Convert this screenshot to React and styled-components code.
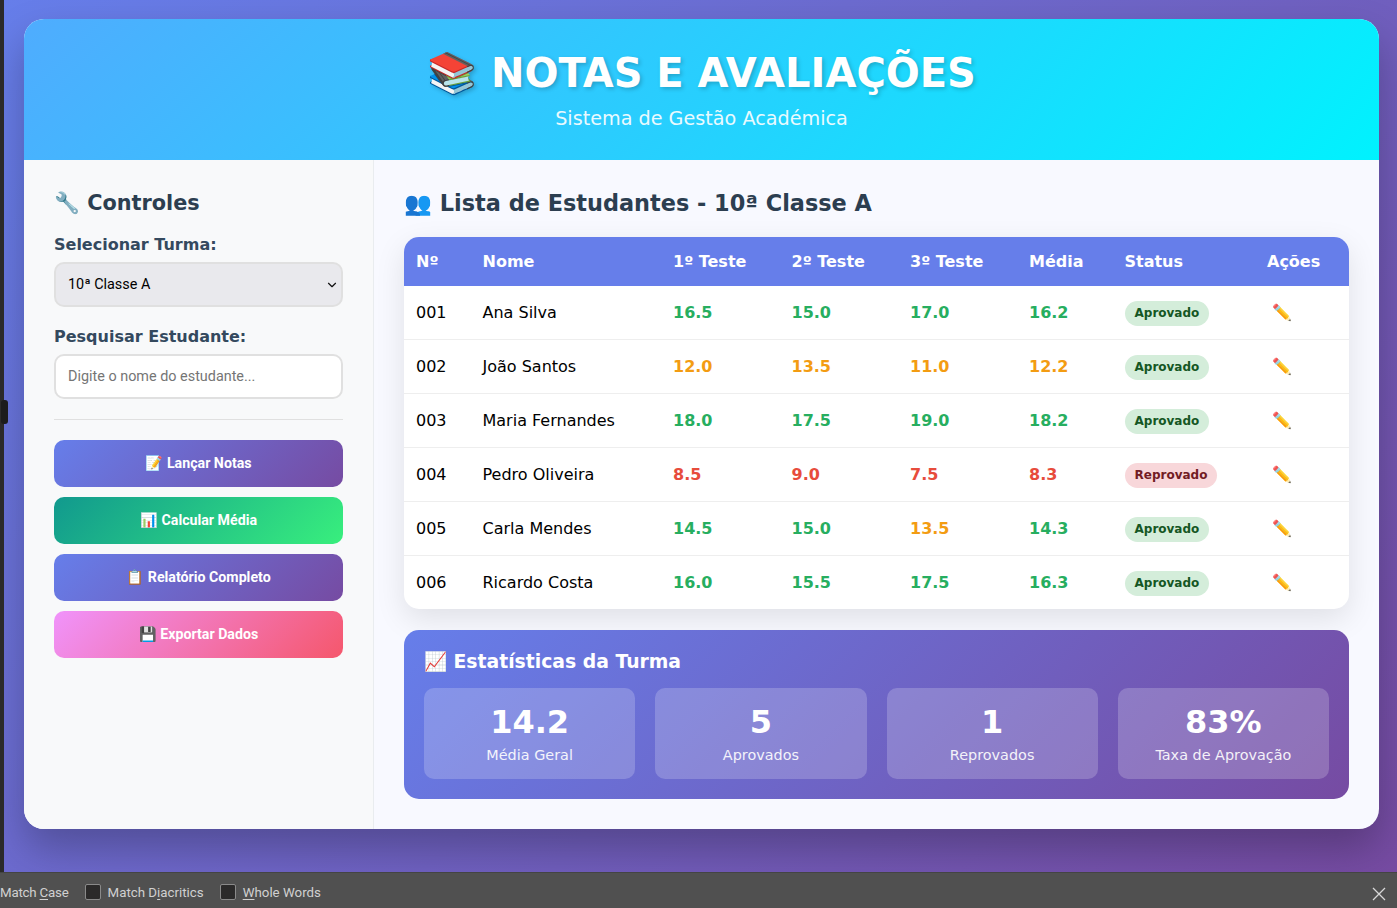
import React from 'react';
import styled, { createGlobalStyle } from 'styled-components';
import { ChevronDown } from 'lucide-react';

const students = [
  { id: '001', name: 'Ana Silva', grades: ['16.5', '15.0', '17.0'], avg: '16.2', passed: true },
  { id: '002', name: 'João Santos', grades: ['12.0', '13.5', '11.0'], avg: '12.2', passed: true },
  { id: '003', name: 'Maria Fernandes', grades: ['18.0', '17.5', '19.0'], avg: '18.2', passed: true },
  { id: '004', name: 'Pedro Oliveira', grades: ['8.5', '9.0', '7.5'], avg: '8.3', passed: false },
  { id: '005', name: 'Carla Mendes', grades: ['14.5', '15.0', '13.5'], avg: '14.3', passed: true },
  { id: '006', name: 'Ricardo Costa', grades: ['16.0', '15.5', '17.5'], avg: '16.3', passed: true },
];

const stats = [
  { value: '14.2', label: 'Média Geral' },
  { value: '5', label: 'Aprovados' },
  { value: '1', label: 'Reprovados' },
  { value: '83%', label: 'Taxa de Aprovação' },
];

const headers = ['Nº', 'Nome', '1º Teste', '2º Teste', '3º Teste', 'Média', 'Status', 'Ações'];
const colWidths = [66.5, 190.5, 118.5, 118.5, 119, 95.5, 142.5, 94];

const gradeLevel = (g) => {
  const n = parseFloat(g);
  if (n >= 14) return 'good';
  if (n >= 10) return 'mid';
  return 'bad';
};

const App = () => {
  return (
    <>
      <GlobalStyle />
      <Screen>
        <Top>
          <EdgeStrip><EdgeHandle /></EdgeStrip>
          <Stage>
            <Card>
              <Header>
                <Title>📚 NOTAS E AVALIAÇÕES</Title>
                <Subtitle>Sistema de Gestão Académica</Subtitle>
              </Header>
              <Content>
                <Sidebar>
                  <SideTitle>🔧 Controles</SideTitle>
                  <Field>
                    <FieldLabel>Selecionar Turma:</FieldLabel>
                    <SelectWrap>
                      <Select defaultValue="10A">
                        <option value="10A">10ª Classe A</option>
                      </Select>
                      <SelectArrow size={14} strokeWidth={2} />
                    </SelectWrap>
                  </Field>
                  <Field>
                    <FieldLabel>Pesquisar Estudante:</FieldLabel>
                    <Input type="text" placeholder="Digite o nome do estudante..." />
                  </Field>
                  <Divider />
                  <ButtonStack>
                    <ActionButton $kind="primary">📝 Lançar Notas</ActionButton>
                    <ActionButton $kind="success">📊 Calcular Média</ActionButton>
                    <ActionButton $kind="primary">📋 Relatório Completo</ActionButton>
                    <ActionButton $kind="pink">💾 Exportar Dados</ActionButton>
                  </ButtonStack>
                </Sidebar>
                <Main>
                  <MainTitle>👥 Lista de Estudantes - 10ª Classe A</MainTitle>
                  <TableWrap>
                    <Table>
                      <colgroup>
                        {colWidths.map((w, i) => <col key={i} style={{ width: w }} />)}
                      </colgroup>
                      <thead>
                        <tr>
                          {headers.map((h) => <Th key={h}>{h}</Th>)}
                        </tr>
                      </thead>
                      <tbody>
                        {students.map((s) => (
                          <Row key={s.id}>
                            <Td>{s.id}</Td>
                            <Td>{s.name}</Td>
                            {s.grades.map((g, i) => (
                              <Td key={i}><Grade $level={gradeLevel(g)}>{g}</Grade></Td>
                            ))}
                            <Td><Grade $level={gradeLevel(s.avg)}>{s.avg}</Grade></Td>
                            <Td>
                              <Badge $passed={s.passed}>{s.passed ? 'Aprovado' : 'Reprovado'}</Badge>
                            </Td>
                            <Td><EditButton>✏️</EditButton></Td>
                          </Row>
                        ))}
                      </tbody>
                    </Table>
                  </TableWrap>
                  <StatsPanel>
                    <StatsTitle>📈 Estatísticas da Turma</StatsTitle>
                    <StatsGrid>
                      {stats.map((st) => (
                        <StatCard key={st.label}>
                          <StatValue>{st.value}</StatValue>
                          <StatLabel>{st.label}</StatLabel>
                        </StatCard>
                      ))}
                    </StatsGrid>
                  </StatsPanel>
                </Main>
              </Content>
            </Card>
          </Stage>
        </Top>
        <FindBar>
          <FindLabel $tight>Match <u>C</u>ase</FindLabel>
          <FindOption><FindBox /><FindLabel>Match D<u>i</u>acritics</FindLabel></FindOption>
          <FindOption><FindBox /><FindLabel><u>W</u>hole Words</FindLabel></FindOption>
          <CloseIcon viewBox="0 0 14 14">
            <path d="M1 1 L13 13 M13 1 L1 13" stroke="#d8d8d8" strokeWidth="1.3" fill="none" />
          </CloseIcon>
        </FindBar>
      </Screen>
    </>
  );
};

export default App;

const GlobalStyle = createGlobalStyle`
  * { box-sizing: border-box; }
  html, body { margin: 0; padding: 0; height: 100%; overflow: hidden; }
  body { font-family: "DejaVu Sans", sans-serif; }
`;

const Screen = styled.div`
  display: flex;
  flex-direction: column;
  width: 100vw;
  height: 100vh;
`;

const Top = styled.div`
  display: flex;
  flex: 1;
  min-height: 0;
`;

const EdgeStrip = styled.div`
  position: relative;
  flex: 0 0 4px;
  background: #2b2a2a;
`;

const EdgeHandle = styled.div`
  position: absolute;
  left: 1px;
  top: 400px;
  width: 7px;
  height: 24px;
  border-radius: 3px;
  background: #1c1c1c;
  z-index: 2;
`;

const Stage = styled.div`
  flex: 1;
  padding: 19px 18px 0 20px;
  background: linear-gradient(135deg, #667eea 0%, #764ba2 100%);
`;

const Card = styled.div`
  height: 810px;
  border-radius: 20px;
  overflow: hidden;
  background: #f8f9ff;
  box-shadow: 0 20px 40px rgba(0, 0, 0, 0.25);
`;

const Header = styled.header`
  height: 141px;
  padding-top: 26px;
  text-align: center;
  color: #fff;
  background: linear-gradient(135deg, #4facfe 0%, #00f2fe 100%);
`;

const Title = styled.h1`
  margin: 0;
  font-size: 40px;
  line-height: 57px;
  font-weight: 700;
  text-shadow: 2px 2px 4px rgba(0, 0, 0, 0.2);
`;

const Subtitle = styled.p`
  margin: 6px 0 0;
  font-size: 19.2px;
  line-height: 22px;
  opacity: 0.9;
`;

const Content = styled.div`
  display: flex;
  height: 669px;
`;

const Sidebar = styled.aside`
  flex: 0 0 350px;
  padding: 30px 30px 0;
  background: #f8f9fa;
  border-right: 1px solid #e9ecef;
`;

const SideTitle = styled.h3`
  margin: 0 0 19px;
  font-size: 20.8px;
  line-height: 26px;
  font-weight: 700;
  color: #2c3e50;
`;

const Field = styled.div`
  margin-bottom: 20px;
`;

const FieldLabel = styled.label`
  display: block;
  margin-bottom: 8px;
  font-size: 16px;
  line-height: 19px;
  font-weight: 700;
  color: #34495e;
`;

const SelectWrap = styled.div`
  position: relative;
`;

const Select = styled.select`
  display: block;
  width: 100%;
  height: 45px;
  padding: 0 12px;
  border: 2px solid #e0e0e0;
  border-radius: 10px;
  background-color: #e9e9ed;
  appearance: none;
  font-family: Roboto, sans-serif;
  font-size: 14.4px;
  color: #000;
`;

const SelectArrow = styled(ChevronDown)`
  position: absolute;
  right: 4px;
  top: 16px;
  color: #111;
  pointer-events: none;
`;

const Input = styled.input`
  display: block;
  width: 100%;
  height: 45px;
  padding: 0 12px;
  border: 2px solid #e0e0e0;
  border-radius: 10px;
  background: #fff;
  font-family: Roboto, sans-serif;
  font-size: 14.4px;
  &::placeholder { color: #757575; }
`;

const Divider = styled.hr`
  height: 1px;
  margin: 0 0 20px;
  border: none;
  background: #e0e0e0;
`;

const ButtonStack = styled.div`
  display: flex;
  flex-direction: column;
  gap: 10px;
`;

const buttonBackgrounds = {
  primary: 'linear-gradient(135deg, #667eea 0%, #764ba2 100%)',
  success: 'linear-gradient(135deg, #11998e 0%, #38ef7d 100%)',
  pink: 'linear-gradient(135deg, #f093fb 0%, #f5576c 100%)',
};

const ActionButton = styled.button`
  display: block;
  width: 100%;
  height: 47px;
  padding: 0 0 1px;
  border: none;
  border-radius: 10px;
  background: ${(p) => buttonBackgrounds[p.$kind]};
  font-family: Roboto, sans-serif;
  font-size: 14.2px;
  font-weight: 700;
  color: #fff;
`;

const Main = styled.main`
  flex: 1;
  min-width: 0;
  padding: 30px;
`;

const MainTitle = styled.h2`
  margin: 0 0 20px;
  font-size: 22.4px;
  line-height: 27px;
  font-weight: 700;
  color: #2c3e50;
`;

const TableWrap = styled.div`
  border-radius: 15px;
  overflow: hidden;
  background: #fff;
  box-shadow: 0 10px 30px rgba(0, 0, 0, 0.1);
`;

const Table = styled.table`
  width: 100%;
  border-collapse: separate;
  border-spacing: 0;
  table-layout: fixed;
`;

const Th = styled.th`
  height: 49px;
  padding: 0 12px;
  background: #667eea;
  font-size: 16px;
  font-weight: 700;
  text-align: left;
  color: #fff;
`;

const Td = styled.td`
  height: 54px;
  padding: 0 12px;
  border-bottom: 1px solid #eee;
  font-size: 16px;
  color: #000;
`;

const Row = styled.tr`
  &:last-child ${Td} {
    height: 53px;
    border-bottom: none;
  }
`;

const gradeColors = { good: '#27ae60', mid: '#f39c12', bad: '#e74c3c' };

const Grade = styled.span`
  font-weight: 700;
  color: ${(p) => gradeColors[p.$level]};
`;

const Badge = styled.span`
  display: inline-block;
  margin-top: 2px;
  padding: 5px 10px;
  border-radius: 20px;
  font-size: 12px;
  line-height: 15px;
  font-weight: 700;
  background: ${(p) => (p.$passed ? '#d4edda' : '#f8d7da')};
  color: ${(p) => (p.$passed ? '#155724' : '#721c24')};
`;

const EditButton = styled.span`
  display: inline-block;
  padding-left: 5px;
  font-size: 16px;
`;

const StatsPanel = styled.section`
  margin-top: 21px;
  height: 169px;
  padding: 20px;
  border-radius: 15px;
  background: linear-gradient(135deg, #667eea 0%, #764ba2 100%);
  color: #fff;
`;

const StatsTitle = styled.h3`
  margin: 0 0 15px;
  font-size: 18.8px;
  line-height: 23px;
  font-weight: 700;
`;

const StatsGrid = styled.div`
  display: grid;
  grid-template-columns: repeat(4, 1fr);
  gap: 20px;
`;

const StatCard = styled.div`
  height: 91px;
  padding-top: 16px;
  border-radius: 10px;
  text-align: center;
  background: rgba(255, 255, 255, 0.2);
`;

const StatValue = styled.div`
  font-size: 32px;
  line-height: 37px;
  font-weight: 700;
`;

const StatLabel = styled.div`
  margin-top: 6px;
  font-size: 14.4px;
  line-height: 17px;
  opacity: 0.9;
`;

const FindBar = styled.div`
  position: relative;
  display: flex;
  align-items: center;
  flex: 0 0 36px;
  gap: 16px;
  padding: 3px 0 0;
  border-top: 1px solid #444;
  background: #505050;
  color: #d0d0d0;
`;

const FindLabel = styled.span`
  font-family: Roboto, sans-serif;
  font-size: 13.3px;
  letter-spacing: ${(p) => (p.$tight ? '-0.2px' : '0')};
  color: #d0d0d0;
  & u { text-underline-offset: 2px; }
`;

const FindOption = styled.div`
  display: flex;
  align-items: center;
  gap: 7px;
`;

const FindBox = styled.span`
  display: block;
  width: 16px;
  height: 16px;
  border: 1px solid #8a8a8a;
  border-radius: 2px;
  background: #2b2a2a;
`;

const CloseIcon = styled.svg`
  position: absolute;
  right: 11px;
  top: 14px;
  width: 14px;
  height: 14px;
`;
